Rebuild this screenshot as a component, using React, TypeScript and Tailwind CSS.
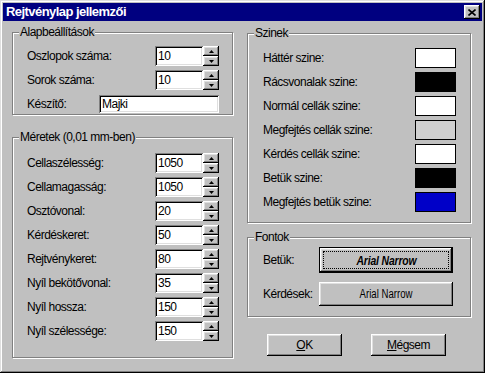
import React from "react";

const RAISED =
  "shadow-[inset_-1px_-1px_0_#000,inset_1px_1px_0_#fff,inset_-2px_-2px_0_#808080,inset_2px_2px_0_#dfdfdf]";
const SUNKEN =
  "shadow-[inset_1px_1px_0_#808080,inset_-1px_-1px_0_#fff,inset_2px_2px_0_#000,inset_-2px_-2px_0_#dfdfdf]";
const TXT = "text-[12px] leading-[15px] tracking-[-0.5px]";

function Group({
  title,
  className,
  children,
}: {
  title: string;
  className: string;
  children: React.ReactNode;
}) {
  return (
    <div
      className={`relative border border-[#808080] shadow-[1px_1px_0_#fff,inset_1px_1px_0_#fff] ${className}`}
    >
      <span className={`absolute left-[6px] top-[-8px] bg-[#c0c0c0] px-[1px] ${TXT}`}>{title}</span>
      {children}
    </div>
  );
}

function Arrow({ up }: { up: boolean }) {
  return (
    <svg width="5" height="3" viewBox="0 0 5 3" className="block">
      {up ? (
        <polygon points="2.5,0 5,3 0,3" fill="#000" />
      ) : (
        <polygon points="0,0 5,0 2.5,3" fill="#000" />
      )}
    </svg>
  );
}

function Spin({ label, value }: { label: string; value: string }) {
  return (
    <div className="flex items-center h-[20px]">
      <div className={`w-[128px] ${TXT}`}>{label}</div>
      <div className={`w-[48px] h-[20px] bg-white ${SUNKEN} flex items-center pl-[3px] ${TXT}`}>{value}</div>
      <div className="flex flex-col w-[16px] h-[20px]">
        <div className={`h-[10px] bg-[#c0c0c0] ${RAISED} flex items-center justify-center`}>
          <Arrow up />
        </div>
        <div className={`h-[10px] bg-[#c0c0c0] ${RAISED} flex items-center justify-center`}>
          <Arrow up={false} />
        </div>
      </div>
    </div>
  );
}

function ColorRow({ label, color }: { label: string; color: string }) {
  return (
    <div className="flex items-center h-[20px]">
      <div className={`w-[152px] ${TXT}`}>{label}</div>
      <div className="w-[41px] h-[20px] border border-black" style={{ backgroundColor: color }} />
    </div>
  );
}

export default function App() {
  return (
    <div className="w-[485px] h-[373px] bg-[#c0c0c0] p-[3px] flex flex-col text-black font-['Liberation_Sans','Arial',sans-serif] shadow-[inset_-1px_-1px_0_#000,inset_1px_1px_0_#dfdfdf,inset_-2px_-2px_0_#808080,inset_2px_2px_0_#fff]">
      {/* Title bar */}
      <div className="h-[18px] bg-[#000080] flex items-center justify-between pl-[3px] pr-[2px]">
        <span className="text-white font-bold text-[13px] leading-[16px] tracking-[-0.55px]">Rejtvénylap jellemzői</span>
        <div className={`w-[16px] h-[14px] bg-[#c0c0c0] ${RAISED} flex items-center justify-center`}>
          <svg width="8" height="7" viewBox="0 0 8 7" className="block">
            <path d="M0.5 0.5 L7.5 6.5 M7.5 0.5 L0.5 6.5" stroke="#000" strokeWidth="1.6" />
          </svg>
        </div>
      </div>

      {/* Body */}
      <div className="flex pl-[9px] pt-[11px] gap-[14px]">
        {/* Left column */}
        <div className="flex flex-col w-[221px]">
          <Group title="Alapbeállítások" className="h-[83px] pt-[13px] pl-[14px]">
            <div className="flex flex-col">
              <Spin label="Oszlopok száma:" value="10" />
              <div className="mt-[4px]">
                <Spin label="Sorok száma:" value="10" />
              </div>
              <div className="mt-[5px] flex items-center h-[18px]">
                <div className={`w-[72px] ${TXT}`}>Készítő:</div>
                <div className={`w-[120px] h-[18px] bg-white ${SUNKEN} flex items-center pl-[3px] ${TXT}`}>Majki</div>
              </div>
            </div>
          </Group>

          <Group title="Méretek (0,01 mm-ben)" className="mt-[22px] h-[221px] pt-[15px] pl-[14px]">
            <div className="flex flex-col gap-[4px]">
              <Spin label="Cellaszélesség:" value="1050" />
              <Spin label="Cellamagasság:" value="1050" />
              <Spin label="Osztóvonal:" value="20" />
              <Spin label="Kérdéskeret:" value="50" />
              <Spin label="Rejtvénykeret:" value="80" />
              <Spin label="Nyíl bekötővonal:" value="35" />
              <Spin label="Nyíl hossza:" value="150" />
              <Spin label="Nyíl szélessége:" value="150" />
            </div>
          </Group>
        </div>

        {/* Right column */}
        <div className="flex flex-col w-[224px] pt-[1px]">
          <Group title="Szinek" className="h-[190px] pt-[14px] pl-[15px]">
            <div className="flex flex-col gap-[4px]">
              <ColorRow label="Háttér szine:" color="#ffffff" />
              <ColorRow label="Rácsvonalak szine:" color="#000000" />
              <ColorRow label="Normál cellák szine:" color="#ffffff" />
              <ColorRow label="Megfejtés cellák szine:" color="#d0d0d0" />
              <ColorRow label="Kérdés cellák szine:" color="#ffffff" />
              <ColorRow label="Betük szine:" color="#000000" />
              <ColorRow label="Megfejtés betük szine:" color="#0000c8" />
            </div>
          </Group>

          <Group title="Fontok" className="mt-[14px] h-[80px] pt-[9px] pl-[15px]">
            <div className="flex flex-col">
              <div className="flex items-center h-[26px]">
                <div className={`w-[56px] ${TXT}`}>Betük:</div>
                <div className="w-[134px] h-[26px] border border-black">
                  <div className={`w-full h-full bg-[#c0c0c0] ${RAISED} p-[3px]`}>
                    <div className="w-full h-full border border-dotted border-black flex items-center justify-center">
                      <span className="inline-block scale-x-[0.8] font-bold italic text-[13px] leading-[15px] tracking-[-0.2px]">
                        Arial Narrow
                      </span>
                    </div>
                  </div>
                </div>
              </div>
              <div className="flex items-center h-[24px] mt-[9px]">
                <div className={`w-[56px] ${TXT}`}>Kérdések:</div>
                <div className={`w-[134px] h-[24px] bg-[#c0c0c0] ${RAISED} flex items-center justify-center`}>
                  <span className="inline-block scale-x-[0.8] text-[12px] leading-[14px]">Arial Narrow</span>
                </div>
              </div>
            </div>
          </Group>

          <div className="flex mt-[17px] pl-[20px] gap-[29px]">
            <div className={`w-[75px] h-[22px] bg-[#c0c0c0] ${RAISED} flex items-center justify-center ${TXT}`}>
              <span>
                <u>O</u>K
              </span>
            </div>
            <div className={`w-[75px] h-[22px] bg-[#c0c0c0] ${RAISED} flex items-center justify-center ${TXT}`}>
              <span>
                <u>M</u>égsem
              </span>
            </div>
          </div>
        </div>
      </div>
    </div>
  );
}
